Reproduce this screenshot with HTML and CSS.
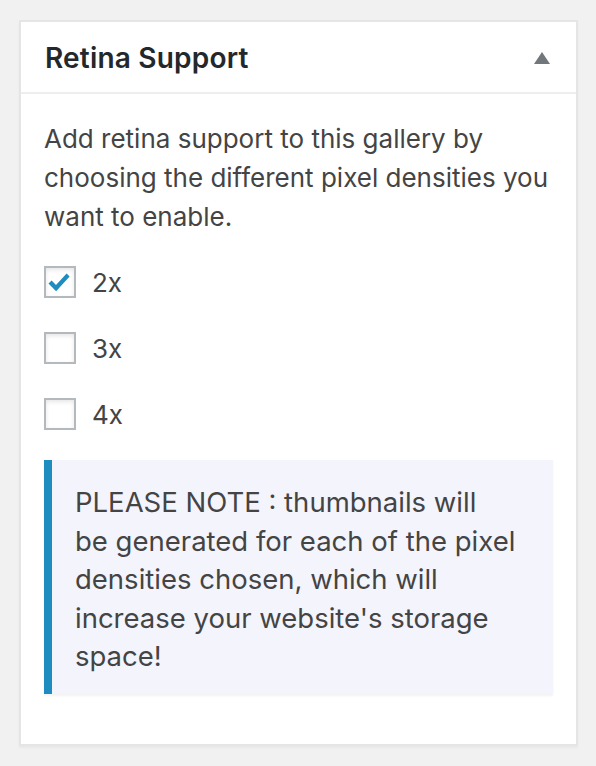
FILE: index.html
```html
<!DOCTYPE html>
<html>
<head>
<meta charset="utf-8">
<link rel="stylesheet" href="styles.css">
</head>
<body>
<div class="postbox">
  <div class="postbox-header">
    <h2 class="hndle">Retina Support</h2>
    <span class="toggle-indicator"></span>
  </div>
  <div class="inside">
    <p class="intro">Add retina support to this gallery by choosing the different pixel densities you want to enable.</p>
    <ul class="options">
      <li class="option">
        <span class="checkbox checked">
          <svg viewBox="0 0 24 22" width="24" height="22"><path d="M1.5 11.5 L4.6 8.6 L9 13 L19.6 1.6 L22.6 4.4 L9.1 19.2 Z" fill="#1e8cbe"/></svg>
        </span>
        <span class="label">2x</span>
      </li>
      <li class="option">
        <span class="checkbox"></span>
        <span class="label">3x</span>
      </li>
      <li class="option">
        <span class="checkbox"></span>
        <span class="label">4x</span>
      </li>
    </ul>
    <div class="notice">
      <p>PLEASE NOTE : thumbnails will<br>be generated for each of the pixel densities chosen, which will increase your website's storage space!</p>
    </div>
  </div>
</div>
</body>
</html>
```
FILE: styles.css
```css
html, body {
  margin: 0;
  padding: 0;
  background: #f1f1f1;
}
body {
  padding: 20px 18px 18px 19px;
  font-family: Inter, "Liberation Sans", sans-serif;
  color: #444;
}
.postbox {
  width: 555px;
  background: #fff;
  border: 2px solid #e5e5e5;
  box-shadow: 0 2px 2px rgba(0,0,0,0.04);
}
.postbox-header {
  height: 72px;
  box-sizing: border-box;
  border-bottom: 2px solid #eee;
  display: flex;
  align-items: center;
  justify-content: space-between;
  padding: 2px 26px 0 24px;
}
.hndle {
  margin: 0;
  font-size: 28px;
  font-weight: 600;
  color: #23282d;
  letter-spacing: 0.2px;
}
.toggle-indicator {
  width: 0;
  height: 0;
  border-left: 8px solid transparent;
  border-right: 8px solid transparent;
  border-bottom: 12px solid #72777c;
  margin-top: 0;
}
.inside {
  padding: 25px 12px 50px 23px;
}
.intro {
  margin: 0;
  font-size: 26px;
  line-height: 39px;
}
.options {
  list-style: none;
  margin: 30px 0 0 0;
  padding: 0;
  display: flex;
  flex-direction: column;
  gap: 34px;
}
.option {
  display: flex;
  align-items: center;
  height: 32px;
}
.checkbox {
  box-sizing: border-box;
  width: 32px;
  height: 32px;
  border: 2px solid #b4b9be;
  background: #fff;
  box-shadow: inset 0 2px 4px rgba(0,0,0,0.1);
  display: flex;
  align-items: center;
  justify-content: center;
}
.checkbox svg {
  margin-left: -2px;
  margin-top: 1px;
}
.label {
  margin-left: 16px;
  font-size: 26px;
  color: #444;
}
.notice {
  margin-top: 30px;
  width: 509px;
  box-sizing: border-box;
  background: #f4f4fd;
  border-left: 8px solid #1e8cbe;
  box-shadow: 0 2px 2px rgba(0,0,0,0.05);
  padding: 23px 24px 18px 23px;
}
.notice p {
  margin: 0;
  font-size: 27.5px;
  line-height: 38.5px;
}
```
